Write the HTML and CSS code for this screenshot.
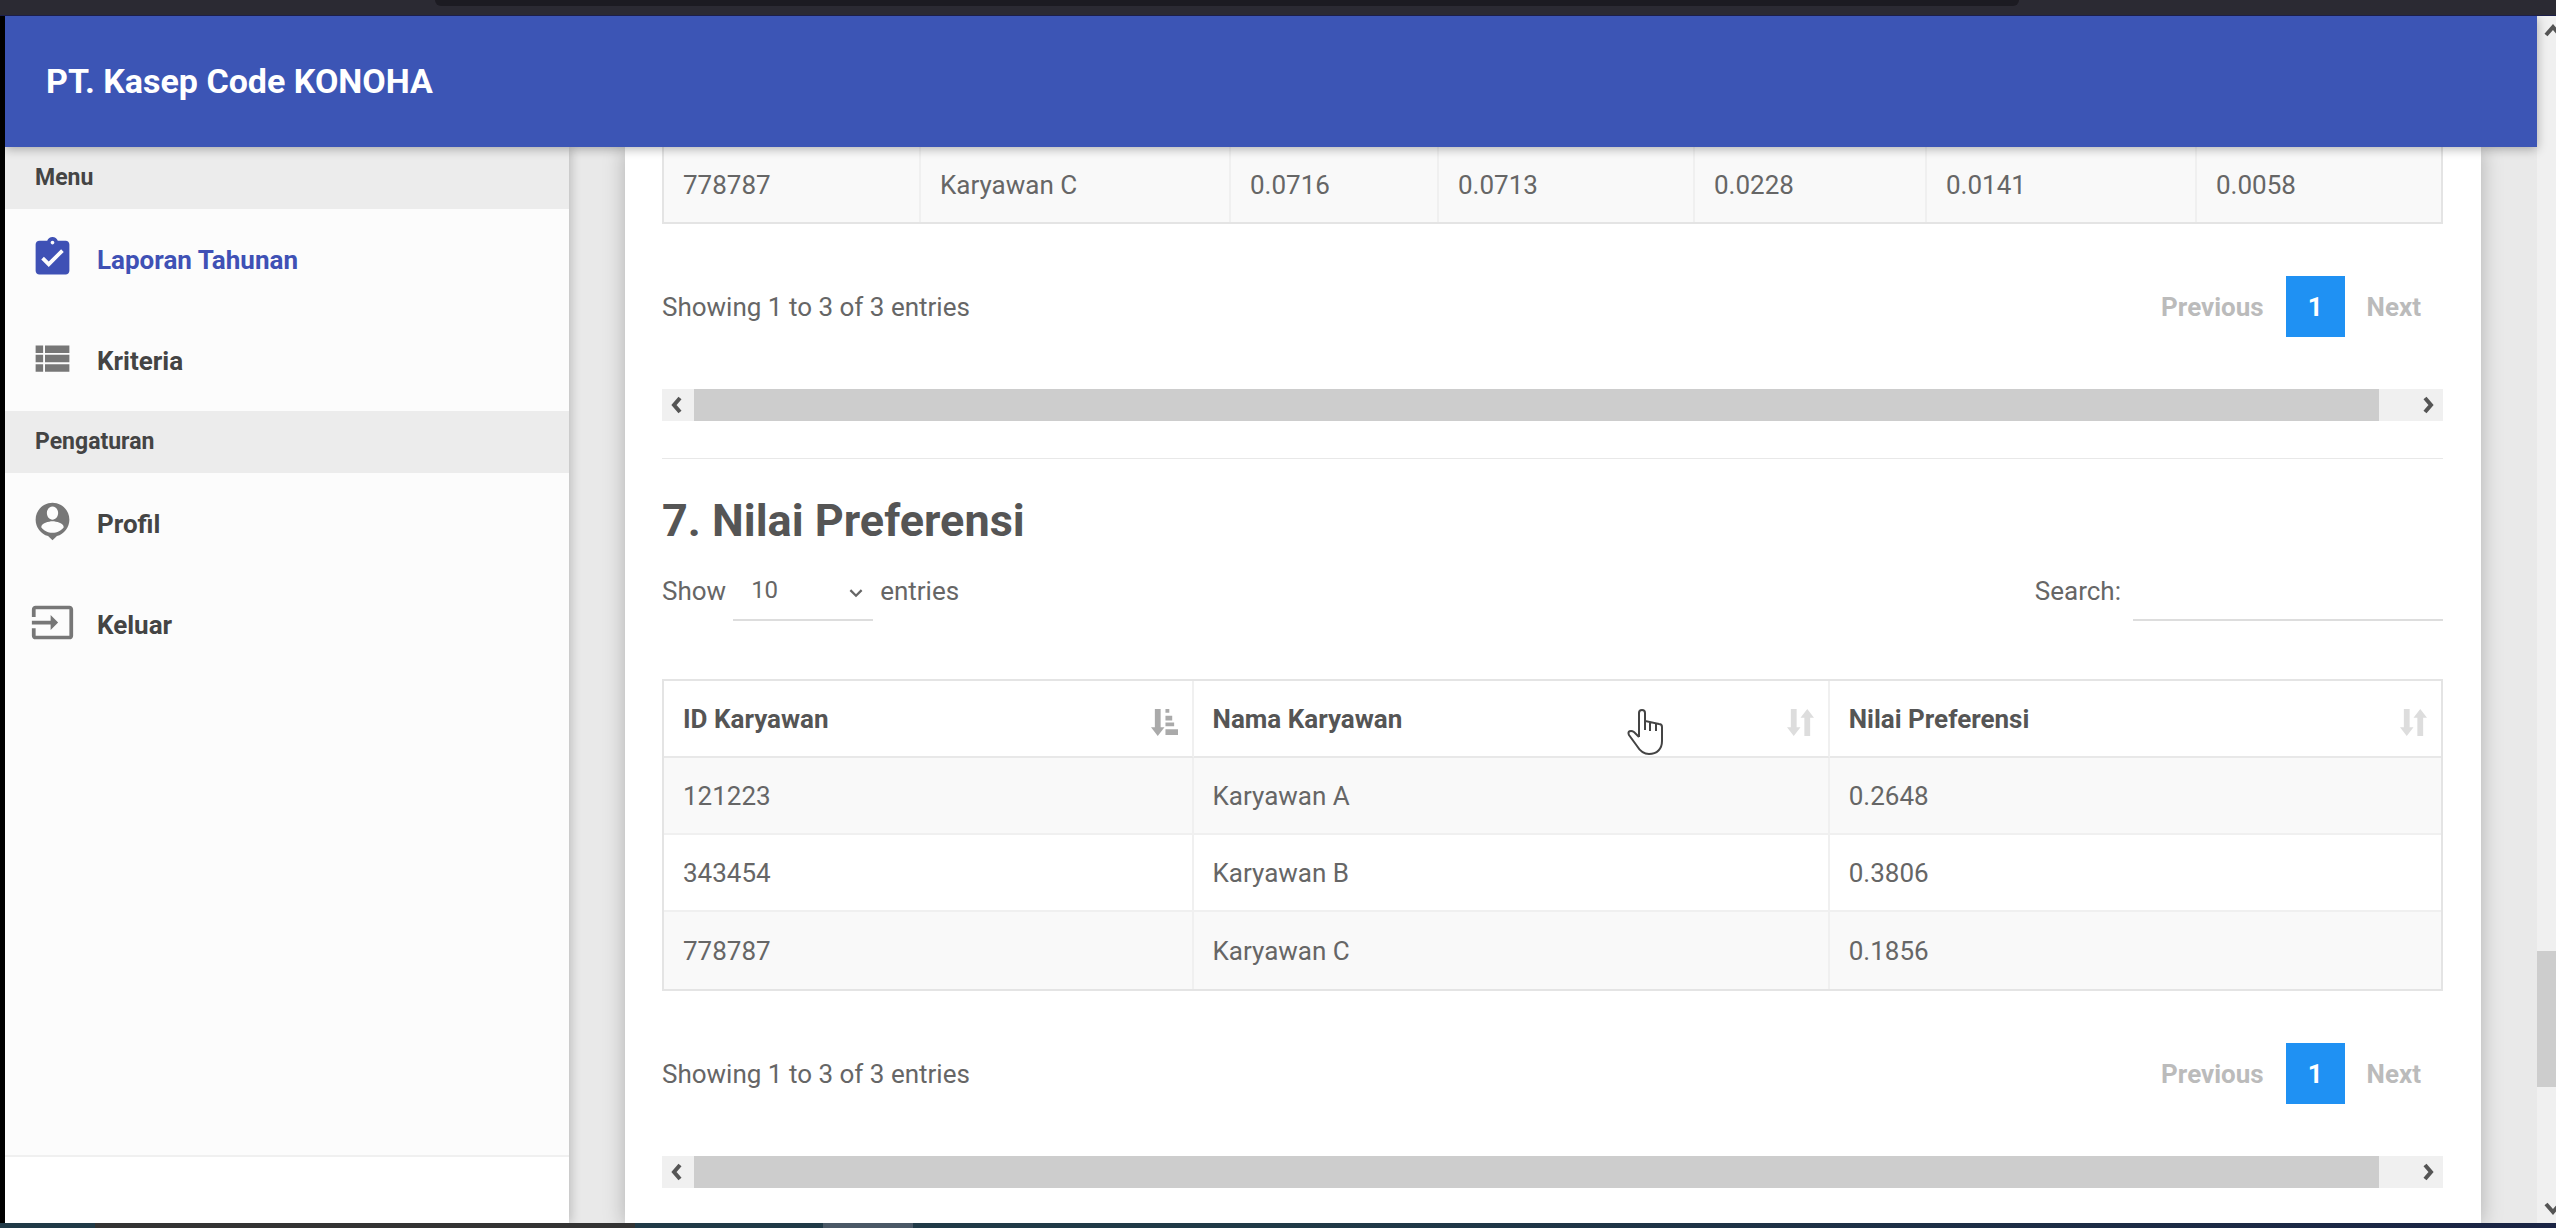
FILE: index.html
```html
<!DOCTYPE html>
<html lang="id">
  <head>
    <meta charset="UTF-8" />
    <meta name="viewport" content="width=device-width, initial-scale=1.0" />
    <title>Laporan Tahunan</title>
    <link rel="stylesheet" href="styles.css">
  </head>

  <body>
    <div class="topstrip"><div class="tabs"></div></div>
    <div class="window">
      <div class="page">
        <header class="navbar">
          <a class="brand" href="#">PT. Kasep Code KONOHA</a>
        </header>

        <div class="content">
          <aside class="sidebar">
            <nav class="menu">
              <div class="menu-header">Menu</div>
              <a class="menu-item active" href="#">
                <svg class="icon" viewBox="0 0 24 24"><path d="M19 3h-4.180C14.400 1.840 13.300 1 12 1c-1.300 0-2.400.84-2.820 2H5c-1.100 0-2 .9-2 2v14c0 1.100.9 2 2 2h14c1.100 0 2-.9 2-2V5c0-1.100-.9-2-2-2zm-7 0c.55 0 1 .45 1 1s-.45 1-1 1-1-.45-1-1 .45-1 1-1zm-2 14l-4-4 1.410-1.410L10 14.170l6.590-6.590L18 9l-8 8z"/></svg>
                <span>Laporan Tahunan</span>
              </a>
              <a class="menu-item" href="#">
                <svg class="icon" viewBox="0 0 24 24"><path d="M3 5h4v4H3zM8 5h13v4H8zM3 10h4v4H3zM8 10h13v4H8zM3 15h4v4H3zM8 15h13v4H8z"/></svg>
                <span>Kriteria</span>
              </a>
              <div class="menu-header">Pengaturan</div>
              <a class="menu-item" href="#">
                <svg class="icon" viewBox="0 0 24 24"><path d="M12 2C7.030 2 3 6 3 11c0 4.170 2.800 7.680 6.620 8.700L12 22l2.380-2.300C18.200 18.680 21 15.170 21 11c0-5-4.030-9-9-9zm0 2c1.660 0 3 1.570 3 3.500S13.660 11 12 11s-3-1.570-3-3.500S10.340 4 12 4zm0 14c-2.500 0-4.710-1.200-6-3 .03-1.990 4-3.080 6-3.080s5.970 1.090 6 3.080c-1.290 1.800-3.500 3-6 3z"/></svg>
                <span>Profil</span>
              </a>
              <a class="menu-item" href="#">
                <svg class="icon" viewBox="0 0 24 24"><path d="M21 3.010H3c-1.100 0-2 .9-2 2V9h2V4.990h18v14.030H3V15H1v4.010c0 1.100.9 1.980 2 1.980h18c1.100 0 2-.88 2-1.980v-14c0-1.110-.9-2-2-2zM11 16l4-4-4-4v3H1v2h10v3z"/></svg>
                <span>Keluar</span>
              </a>
            </nav>
            <div class="legal"></div>
          </aside>

          <main class="card">
            <table class="table matrix">
              <tbody>
                <tr class="odd">
                  <td>778787</td>
                  <td>Karyawan C</td>
                  <td>0.0716</td>
                  <td>0.0713</td>
                  <td>0.0228</td>
                  <td>0.0141</td>
                  <td>0.0058</td>
                </tr>
              </tbody>
            </table>
            <div class="table-footer">
              <div>Showing 1 to 3 of 3 entries</div>
              <div class="pagination">
                <button type="button" disabled>Previous</button>
                <button type="button" class="current">1</button>
                <button type="button" disabled>Next</button>
              </div>
            </div>
            <div class="hscroll">
              <svg class="arrow" viewBox="0 0 32 32"><path d="M18 9l-6 7 6 7"/></svg>
              <div class="thumb"></div>
              <svg class="arrow" viewBox="0 0 32 32"><path d="M14 9l6 7-6 7"/></svg>
            </div>

            <hr class="divider" />

            <h2>7. Nilai Preferensi</h2>
            <div class="table-tools">
              <label class="length">
                Show
                <span class="select">
                  <select name="length">
                    <option>10</option>
                    <option>25</option>
                    <option>50</option>
                    <option>100</option>
                  </select>
                  <svg viewBox="0 0 12 8"><path d="M1 1l5 5 5-5"/></svg>
                </span>
                entries
              </label>
              <label class="search">Search: <input type="search" name="search" /></label>
            </div>

            <table class="table preferensi">
              <thead>
                <tr>
                  <th>
                    ID Karyawan
                    <svg class="sort sorted" viewBox="0 0 28 28"><path d="M4 0h6v19h4l-7 9-7-9h4zM15 0h4v4h-4zM15 7h7v5h-7zM15 14h9v4h-9zM15 21h13v6H15z"/></svg>
                  </th>
                  <th>
                    Nama Karyawan
                    <svg class="sort" viewBox="0 0 28 28"><path d="M4 0h6v19h4l-7 9-7-9h4zM18 28V9h-4l7-9 7 9h-4v19z"/></svg>
                    <svg class="pointer" viewBox="0 0 34 46"><path d="M11 28V4c0-4 6-4 6 0v8l14 3c2 0 3 1 3 3v14c0 8-5 13-13 13-6 0-9-3-12-8L1 26c-2-4 2-5 5-3l5 5M17 12v9M22 13v9M28 14v8"/></svg>
                  </th>
                  <th>
                    Nilai Preferensi
                    <svg class="sort" viewBox="0 0 28 28"><path d="M4 0h6v19h4l-7 9-7-9h4zM18 28V9h-4l7-9 7 9h-4v19z"/></svg>
                  </th>
                </tr>
              </thead>
              <tbody>
                <tr class="odd">
                  <td>121223</td>
                  <td>Karyawan A</td>
                  <td>0.2648</td>
                </tr>
                <tr>
                  <td>343454</td>
                  <td>Karyawan B</td>
                  <td>0.3806</td>
                </tr>
                <tr class="odd">
                  <td>778787</td>
                  <td>Karyawan C</td>
                  <td>0.1856</td>
                </tr>
              </tbody>
            </table>
            <div class="table-footer">
              <div>Showing 1 to 3 of 3 entries</div>
              <div class="pagination">
                <button type="button" disabled>Previous</button>
                <button type="button" class="current">1</button>
                <button type="button" disabled>Next</button>
              </div>
            </div>
            <div class="hscroll">
              <svg class="arrow" viewBox="0 0 32 32"><path d="M18 9l-6 7 6 7"/></svg>
              <div class="thumb"></div>
              <svg class="arrow" viewBox="0 0 32 32"><path d="M14 9l6 7-6 7"/></svg>
            </div>
          </main>
        </div>
      </div>

      <div class="vscroll">
        <svg class="arrow" viewBox="0 0 32 32"><path d="M9 19l7-8 7 8"/></svg>
        <div class="thumb"></div>
        <svg class="arrow" viewBox="0 0 32 32"><path d="M9 13l7 8 7-8"/></svg>
      </div>
    </div>
    <div class="taskbar"><span class="task"></span><span class="task-active"></span></div>
  </body>
</html>
```

FILE: styles.css
```css
* {
  box-sizing: border-box;
}

body {
  margin: 0;
  height: 100vh;
  display: flex;
  flex-direction: column;
  overflow: hidden;
  background-color: #e9e9e9;
  font-family: Roboto, sans-serif;
  font-size: 26px;
  color: #666;
}

.topstrip {
  flex: none;
  height: 16px;
  padding: 0 21% 0 17%;
  background-color: #2b2a33;
  border-bottom: 1px solid #1c1f4a;
}

.tabs {
  height: 6px;
  background-color: #1c1b22;
  border-radius: 0 0 6px 6px;
}

.window {
  flex: 1;
  min-height: 0;
  display: flex;
  overflow: hidden;
  border-left: 5px solid #000;
}

.page {
  flex: 1;
  min-width: 0;
  display: flex;
  flex-direction: column;
}

.navbar {
  flex: none;
  position: relative;
  z-index: 1;
  display: flex;
  align-items: center;
  height: 131px;
  padding: 0 41px 2px;
  background-color: #3c55b5;
  box-shadow: 0 2px 10px rgba(0, 0, 0, 0.3);
}

.brand {
  color: #fff;
  font-size: 34px;
  font-weight: 700;
  text-decoration: none;
}

.content {
  flex: 1;
  min-height: 0;
  display: flex;
}

.sidebar {
  flex: none;
  width: 564px;
  display: flex;
  flex-direction: column;
  background-color: #fcfcfc;
  box-shadow: 2px 0 10px rgba(0, 0, 0, 0.2);
}

.menu {
  flex: 1;
}

.menu-header {
  padding: 0 30px;
  line-height: 62px;
  background-color: #ececec;
  color: #444;
  font-size: 23px;
  font-weight: 700;
}

.menu-item {
  display: flex;
  align-items: center;
  gap: 22px;
  height: 101px;
  padding: 0 25px;
  color: #444;
  font-weight: 700;
  text-decoration: none;
}

.icon {
  width: 45px;
  height: 45px;
  margin-bottom: 4px;
  fill: #777;
}

.menu-item.active {
  color: #3f51b5;
}

.active .icon {
  fill: #3f51b5;
}

.legal {
  height: 68px;
  border-top: 2px solid #f0f0f0;
  background-color: #fff;
}

.card {
  flex: 1;
  min-width: 0;
  margin: 0 56px;
  padding: 0 38px 0 37px;
  background-color: #fff;
  box-shadow: 0 2px 20px rgba(0, 0, 0, 0.25);
}

.table {
  width: 100%;
  table-layout: fixed;
  border-collapse: separate;
  border-spacing: 0;
  border: 2px solid #e4e4e4;
}

.table th,
.table td {
  height: 77px;
  padding: 0 19px;
  border-right: 2px solid #f0f0f0;
  border-bottom: 2px solid #f0f0f0;
  text-align: left;
}

.table th:last-child,
.table td:last-child {
  border-right: 0;
}

.table tr:last-child td {
  border-bottom: 0;
}

.table .odd {
  background-color: #f9f9f9;
}

.matrix {
  border-top: 0;
}

.matrix td {
  height: 75px;
}

.matrix td:nth-child(1) {
  width: 257px;
}

.matrix td:nth-child(2) {
  width: 310px;
}

.matrix td:nth-child(3) {
  width: 208px;
}

.matrix td:nth-child(4) {
  width: 256px;
}

.matrix td:nth-child(5) {
  width: 232px;
}

.matrix td:nth-child(6) {
  width: 270px;
}

.preferensi th {
  position: relative;
  border-bottom-color: #e8e8e8;
  color: #555;
}

.preferensi th:nth-child(1) {
  width: 29.8%;
}

.preferensi th:nth-child(2) {
  width: 35.8%;
}

.sort {
  position: absolute;
  right: 14px;
  bottom: 20px;
  width: 27px;
  height: 27px;
  fill: #ddd;
}

.sorted {
  fill: #aaa;
}

.pointer {
  position: absolute;
  top: 28px;
  right: 166px;
  width: 34px;
  height: 46px;
  overflow: visible;
  fill: #fff;
  stroke: #444;
  stroke-width: 2;
}

.table-footer {
  display: flex;
  justify-content: space-between;
  align-items: center;
  padding: 52px 0;
}

.pagination {
  display: flex;
}

.pagination button {
  height: 61px;
  padding: 0 22px;
  border: 0;
  background-color: transparent;
  color: #bbb;
  font-family: inherit;
  font-size: 26px;
  font-weight: 700;
}

.pagination .current {
  background-color: #1f91f3;
  color: #fff;
}

.hscroll {
  display: flex;
  height: 32px;
  background-color: #f0f0f0;
}

.hscroll .thumb {
  flex: 1;
  margin-right: 32px;
  background-color: #cdcdcd;
}

.arrow {
  flex: none;
  width: 32px;
  height: 32px;
  fill: none;
  stroke: #555;
  stroke-width: 4;
}

.divider {
  margin: 37px 0;
  border: 0;
  border-top: 1px solid #e8e8e8;
}

h2 {
  margin: 0;
  color: #555;
  font-size: 45px;
  line-height: 50px;
}

.table-tools {
  display: flex;
  justify-content: space-between;
  padding: 15px 0 58px;
}

.length,
.search {
  display: flex;
  align-items: center;
}

.length {
  gap: 7px;
}

.search {
  gap: 12px;
}

.select {
  position: relative;
}

.select svg {
  position: absolute;
  right: 10px;
  bottom: 23px;
  width: 14px;
  height: 9px;
  fill: none;
  stroke: #666;
  stroke-width: 2;
}

.select select {
  width: 140px;
  appearance: none;
}

.select select,
.search input {
  display: block;
  height: 60px;
  padding: 0 18px;
  border: 0;
  border-bottom: 2px solid #ddd;
  border-radius: 0;
  background-color: transparent;
  color: #666;
  font-family: inherit;
  font-size: 24px;
}

.search input {
  width: 310px;
}

.vscroll {
  flex: none;
  width: 19px;
  display: flex;
  flex-direction: column;
  align-items: flex-start;
  overflow: hidden;
  background-color: #f0f0f0;
}

.vscroll .thumb {
  width: 100%;
  height: 136px;
  margin: auto 0 104px;
  background-color: #cdcdcd;
}

.taskbar {
  flex: none;
  display: flex;
  height: 5px;
  padding-left: 95px;
  background: linear-gradient(to right, #203a47 50%, #1a2444);
}

.task {
  width: 540px;
  background-color: #333;
}

.task-active {
  width: 90px;
  margin-left: 188px;
  background-color: #4a5866;
}
```
